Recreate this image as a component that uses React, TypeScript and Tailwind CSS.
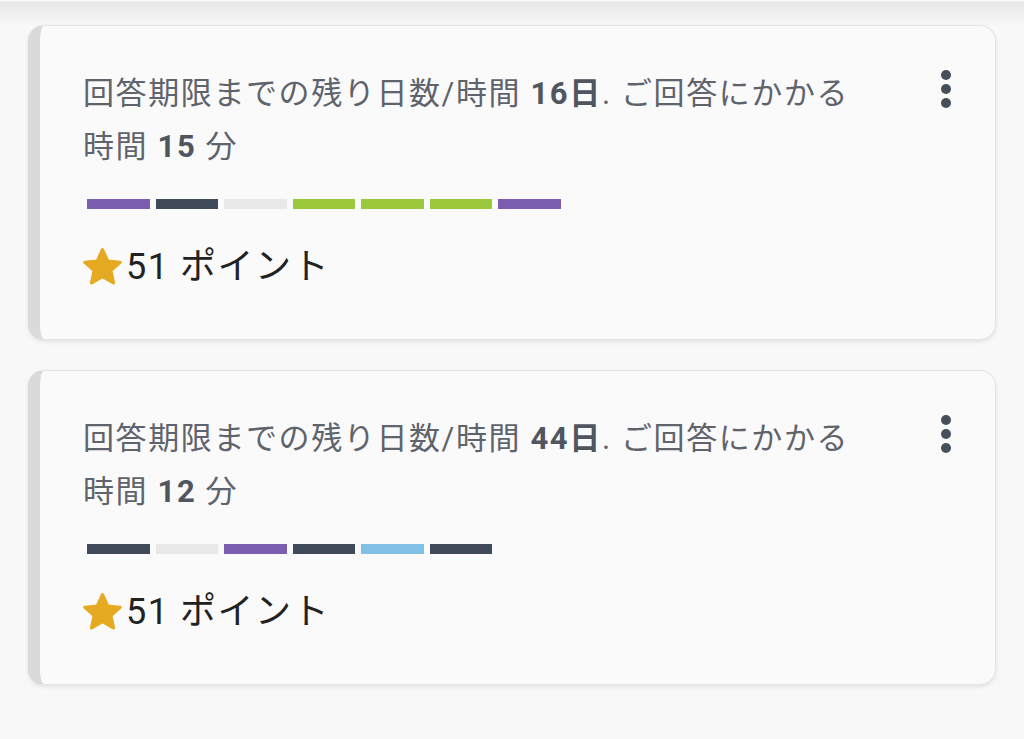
const font = { fontFamily: 'Roboto, "Noto Sans CJK JP", sans-serif' };

const COLORS: Record<string, string> = {
    purple: "bg-[#7b5eb0]",
    dark: "bg-[#414a58]",
    light: "bg-[#e8e8e8]",
    green: "bg-[#9cc83b]",
    blue: "bg-[#80c0e6]",
};

interface Survey {
    id: number;
    days: string;
    minutes: string;
    bars: string[];
    points: number;
}

const surveys: Survey[] = [
    { id: 1, days: "16", minutes: "15", bars: ["purple", "dark", "light", "green", "green", "green", "purple"], points: 51 },
    { id: 2, days: "44", minutes: "12", bars: ["dark", "light", "purple", "dark", "blue", "dark"], points: 51 },
];

const StarIcon = () => (
    <svg viewBox="2.4 2.4 19.2 18.6" className="w-[39px] h-[38px] shrink-0 mr-[4px]">
        <path
            d="M12 3.2l2.6 5.6 6.1.6-4.6 4.1 1.3 6-5.4-3.1-5.4 3.1 1.3-6-4.6-4.1 6.1-.6z"
            fill="#e5aa22"
            stroke="#e5aa22"
            strokeWidth="1.6"
            strokeLinejoin="round"
        />
    </svg>
);

const SurveyCard = ({ survey }: { survey: Survey }) => (
    <div className="rounded-2xl border border-[#e4e4e4] border-l-[12px] border-l-[#dadada] bg-[#fafafb] shadow-[0_2px_4px_rgba(0,0,0,0.09)] pl-[43px] pr-[38px] pt-[41px] pb-[52px]">
        <div className="flex justify-between">
            <p className="text-[31px] leading-[53px] text-[#5f636b] tracking-[1.6px]">
                回答期限までの残り日数/時間 <b className="font-bold text-[#50565f]">{survey.days}日</b>. ご回答にかかる
                <br />
                時間 <b className="font-bold text-[#50565f]">{survey.minutes}</b> 分
            </p>
            <div className="flex flex-col gap-[4px] pt-[3px] pr-[6px]">
                <span className="w-[10px] h-[10px] rounded-full bg-[#474f5b]" />
                <span className="w-[10px] h-[10px] rounded-full bg-[#474f5b]" />
                <span className="w-[10px] h-[10px] rounded-full bg-[#474f5b]" />
            </div>
        </div>

        {/* progress bars */}
        <div className="flex gap-[6px] mt-[26px] ml-[4px]">
            {survey.bars.map((c, i) => (
                <div key={i} className={`w-[62.5px] h-[10px] ${COLORS[c]}`} />
            ))}
        </div>

        <div className="flex items-center mt-[38px] h-[40px]">
            <StarIcon />
            <span className="text-[36px] text-[#222] leading-none tracking-[1.5px]">{survey.points} ポイント</span>
        </div>
    </div>
);

export default function App() {
    return (
        <div
            style={font}
            className="min-h-[739px] bg-[linear-gradient(to_bottom,#ffffff_0px,#e6e6e6_2px,#f8f8f8_26px)] px-[28px] pt-[25px] pb-[40px]"
        >
            <div className="flex flex-col gap-[30px]">
                {surveys.map(s => (
                    <SurveyCard key={s.id} survey={s} />
                ))}
            </div>
        </div>
    );
}
